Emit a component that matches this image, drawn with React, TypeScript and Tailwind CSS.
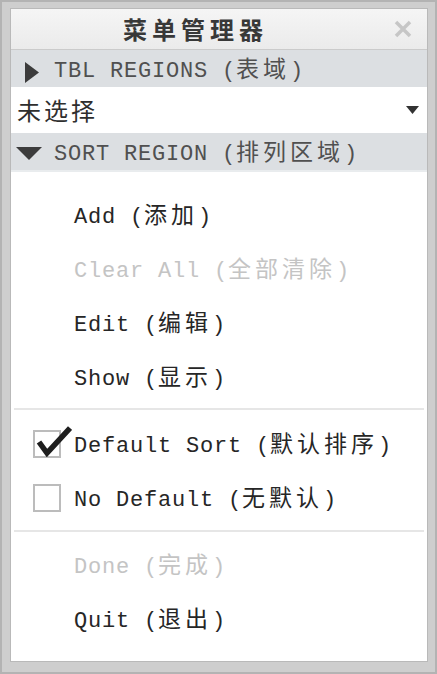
import type { ReactNode } from "react"

const mono = "font-['Liberation_Mono','Noto_Sans_CJK_SC',monospace]"
const cjk = "font-['Noto_Sans_CJK_SC',sans-serif]"

function Label({ en, zh, dim }: { en: string; zh: string; dim?: boolean }) {
  return (
    <span className={`flex items-baseline whitespace-pre ${dim ? "text-[#c4c4c4]" : "text-[#262626]"}`}>
      <span className={`${mono} text-[22px] tracking-[0.8px]`}>{en} (</span>
      <span className={`${cjk} text-[23px] tracking-[4px]`}>{zh}</span>
      <span className={`${mono} text-[22px]`}>)</span>
    </span>
  )
}

function Item({ en, zh, dim }: { en: string; zh: string; dim?: boolean }) {
  return (
    <div className="flex h-[54px] items-center pl-[63px]">
      <Label en={en} zh={zh} dim={dim} />
    </div>
  )
}

function Check({ checked, children }: { checked?: boolean; children: ReactNode }) {
  return (
    <div className="flex h-[54px] items-center pl-[22px]">
      <span className="relative mr-[13px] h-[28px] w-[28px] border-2 border-[#bcbcbc] bg-white">
        {checked && (
          <svg className="absolute -top-[7px] left-[1px]" width="36" height="32" viewBox="0 0 36 32">
            <path d="M3 17 L11 28 L34 3" fill="none" stroke="#1e1e1e" strokeWidth="5.5" strokeLinejoin="miter" />
          </svg>
        )}
      </span>
      {children}
    </div>
  )
}

function Divider() {
  return <div className="mx-[3px] h-[2px] bg-[#e6e6e6]" />
}

function SectionHead({ open, en, zh }: { open?: boolean; en: string; zh: string }) {
  return (
    <div className="flex h-[37px] items-center bg-[#dcdfe2] text-[#505050]">
      <span className="flex w-[43px] items-center">
        {open ? (
          <svg width="26" height="13" viewBox="0 0 26 13" className="ml-[5px] mt-[4px]"><path d="M0 0 H26 L13 13 Z" fill="#3c3c3c" /></svg>
        ) : (
          <svg width="14" height="21" viewBox="0 0 14 21" className="ml-[14px] mt-[8px]"><path d="M0 0 L14 10.5 L0 21 Z" fill="#3c3c3c" /></svg>
        )}
      </span>
      <span className="flex items-baseline whitespace-pre">
        <span className={`${mono} text-[22px] tracking-[0.8px]`}>{en} (</span>
        <span className={`${cjk} text-[23px] tracking-[4px]`}>{zh}</span>
        <span className={`${mono} text-[22px]`}>)</span>
      </span>
    </div>
  )
}

export default function App() {
  return (
    <div className="h-[674px] w-[437px] border-2 border-[#b3b3b3] bg-[#cecece] pb-[10px] pl-[8px] pr-[7px] pt-[6px]">
      <div className="flex h-full flex-col border border-[#b9b9b9] bg-white">
        <div className="flex h-[41px] items-center justify-between border-b border-[#cbcbcb] bg-gradient-to-b from-[#f5f5f5] to-[#ebebeb] pl-[112px] pr-[15px]">
          <span className={`${cjk} text-[24px] font-bold tracking-[5px] text-[#383838]`}>菜单管理器</span>
          <svg width="18" height="18" viewBox="0 0 18 18">
            <path d="M2 2 L16 16 M16 2 L2 16" stroke="#c6c6c6" strokeWidth="3.5" />
          </svg>
        </div>
        <SectionHead en="TBL REGIONS" zh="表域" />
        <div className="flex h-[46px] items-center justify-between bg-white pl-[6px] pr-[8px]">
          <span className={`${cjk} text-[24px] tracking-[3px] text-[#2e2e2e]`}>未选择</span>
          <svg width="13" height="8" viewBox="0 0 13 8"><path d="M0 0 H13 L6.5 8 Z" fill="#333" /></svg>
        </div>
        <SectionHead open en="SORT REGION" zh="排列区域" />
        <div className="h-[2px] bg-[#e9ecee]" />
        <div className="flex flex-1 flex-col bg-white pt-[16px]">
          <Item en="Add" zh="添加" />
          <Item en="Clear All" zh="全部清除" dim />
          <Item en="Edit" zh="编辑" />
          <Item en="Show" zh="显示" />
          <div className="mt-[4px]" />
          <Divider />
          <div className="mt-[7px]" />
          <Check checked>
            <Label en="Default Sort" zh="默认排序" />
          </Check>
          <Check>
            <Label en="No Default" zh="无默认" />
          </Check>
          <div className="mt-[5px]" />
          <Divider />
          <div className="mt-[6px]" />
          <Item en="Done" zh="完成" dim />
          <Item en="Quit" zh="退出" />
        </div>
      </div>
    </div>
  )
}
